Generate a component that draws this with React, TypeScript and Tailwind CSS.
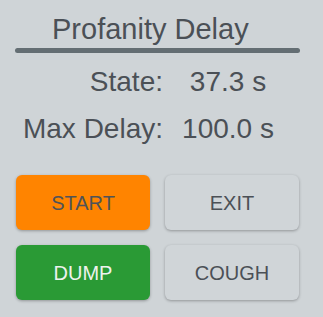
export default function App() {
  const btn =
    "flex h-[55px] items-center justify-center rounded-[6px] text-[20px] shadow-[0_1px_3px_rgba(0,0,0,0.3)]";

  return (
    <div className="h-[317px] w-[323px] overflow-hidden bg-[#cfd4d7] font-['Liberation_Sans',Arial,sans-serif] text-[#4b5056]">
      <div className="pl-[52px] pt-[13px] text-[29px] leading-[33px]">Profanity Delay</div>
      <div className="ml-[15px] mt-[2px] h-[5px] w-[285px] rounded-full bg-[#646e73]" />

      <div className="mt-[13px] grid grid-cols-[163px_130px] gap-y-[15px] text-[28px] leading-[32px]">
        <div className="text-right">State:</div>
        <div className="text-center">37.3 s</div>
        <div className="text-right">Max Delay:</div>
        <div className="text-center">100.0 s</div>
      </div>

      <div className="mt-[30px] grid grid-cols-[134px_134px] gap-x-[15px] gap-y-[15px] pl-[16px]">
        <button className={`${btn} bg-[#ff8400] text-[#4f5358]`}>START</button>
        <button className={`${btn} bg-[#d0d5d8] text-[#4b5056]`}>EXIT</button>
        <button className={`${btn} bg-[#2a9a35] text-[#eef2ee]`}>DUMP</button>
        <button className={`${btn} bg-[#d0d5d8] text-[#4b5056]`}>COUGH</button>
      </div>
    </div>
  );
}
